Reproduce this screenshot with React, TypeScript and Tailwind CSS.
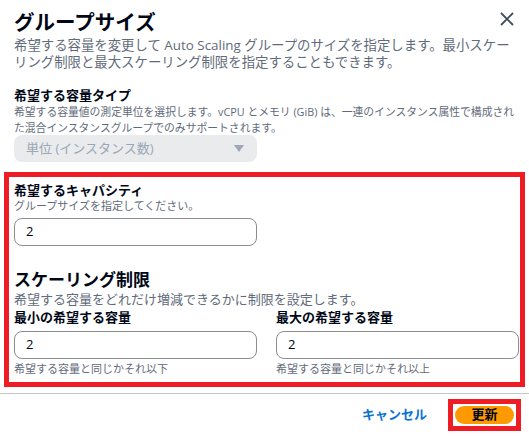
export default function App() {
  return (
    <div className="w-[529px] h-[436px] bg-white overflow-hidden font-['Open_Sans','Noto_Sans_CJK_JP',sans-serif] text-[#000716]">
      <div className="flex items-start justify-between pl-[14px] pr-[14px] pt-[9px]">
        <h2 className="text-[20.5px] leading-[26px] font-bold">グループサイズ</h2>
        <svg width="16" height="16" viewBox="0 0 16 16" className="mt-[2px]">
          <path d="M2 2L14 14M14 2L2 14" stroke="#414d5c" strokeWidth="1.8" fill="none" />
        </svg>
      </div>
      <p className="px-[14px] mt-[2px] text-[13.4px] leading-[17px] text-[#5f6b7a]">
        希望する容量を変更して Auto Scaling グループのサイズを指定します。最小スケーリング制限と最大スケーリング制限を指定することもできます。
      </p>
      <div className="px-[14px] mt-[16px]">
        <div className="text-[13px] leading-[16px] font-bold">希望する容量タイプ</div>
        <p className="mt-[1px] text-[10.8px] leading-[16px] text-[#5f6b7a]">
          希望する容量値の測定単位を選択します。vCPU とメモリ (GiB) は、一連のインスタンス属性で構成された混合インスタンスグループでのみサポートされます。
        </p>
        <div className="-mt-[1px] w-[243px] h-[27px] rounded-[8px] bg-[#e9ebed] flex items-center justify-between pl-[12px] pr-[13px] text-[13px] text-[#9ba7b6]">
          <span>単位 (インスタンス数)</span>
          <svg width="10" height="7" viewBox="0 0 10 7">
            <path d="M0 0H10L5 7Z" fill="#9ba7b6" />
          </svg>
        </div>
      </div>
      <div className="ml-[4px] mt-[10px] w-[521px] h-[215px] border-[5px] border-[#ee1c25] pl-[5px] pt-[5px]">
        <div className="text-[13px] leading-[16px] font-bold">希望するキャパシティ</div>
        <div className="mt-[1px] text-[11px] leading-[14px] text-[#5f6b7a]">グループサイズを指定してください。</div>
        <div className="mt-[5px] w-[243px] h-[28px] rounded-[8px] border border-[#8c8c94] flex items-center pl-[11px] text-[13px]">2</div>
        <div className="mt-[23px] text-[17px] leading-[22px] font-bold">スケーリング制限</div>
        <div className="text-[13px] leading-[17px] text-[#5f6b7a]">希望する容量をどれだけ増減できるかに制限を設定します。</div>
        <div className="flex gap-[19px]">
          <div className="w-[243px]">
            <div className="text-[13px] leading-[18px] font-bold">最小の希望する容量</div>
            <div className="mt-[5px] h-[28px] rounded-[8px] border border-[#8c8c94] flex items-center pl-[11px] text-[13px]">2</div>
            <div className="mt-[3px] text-[11px] leading-[14px] text-[#5f6b7a]">希望する容量と同じかそれ以下</div>
          </div>
          <div className="w-[243px]">
            <div className="text-[13px] leading-[18px] font-bold">最大の希望する容量</div>
            <div className="mt-[5px] h-[28px] rounded-[8px] border border-[#8c8c94] flex items-center pl-[11px] text-[13px]">2</div>
            <div className="mt-[3px] text-[11px] leading-[14px] text-[#5f6b7a]">希望する容量と同じかそれ以上</div>
          </div>
        </div>
      </div>
      <div className="mt-[6px] h-px bg-[#c6c6cd]" />
      <div className="flex items-center justify-end pr-[8px] mt-[5px] gap-[21px]">
        <span className="text-[13px] font-bold text-[#0972d3]">キャンセル</span>
        <div className="w-[73px] h-[32px] border-[5px] border-[#ee1c25] p-[2px]">
          <div className="h-full rounded-full bg-[#ff9900] flex items-center justify-center text-[13px] font-bold text-[#000716]">更新</div>
        </div>
      </div>
    </div>
  );
}
